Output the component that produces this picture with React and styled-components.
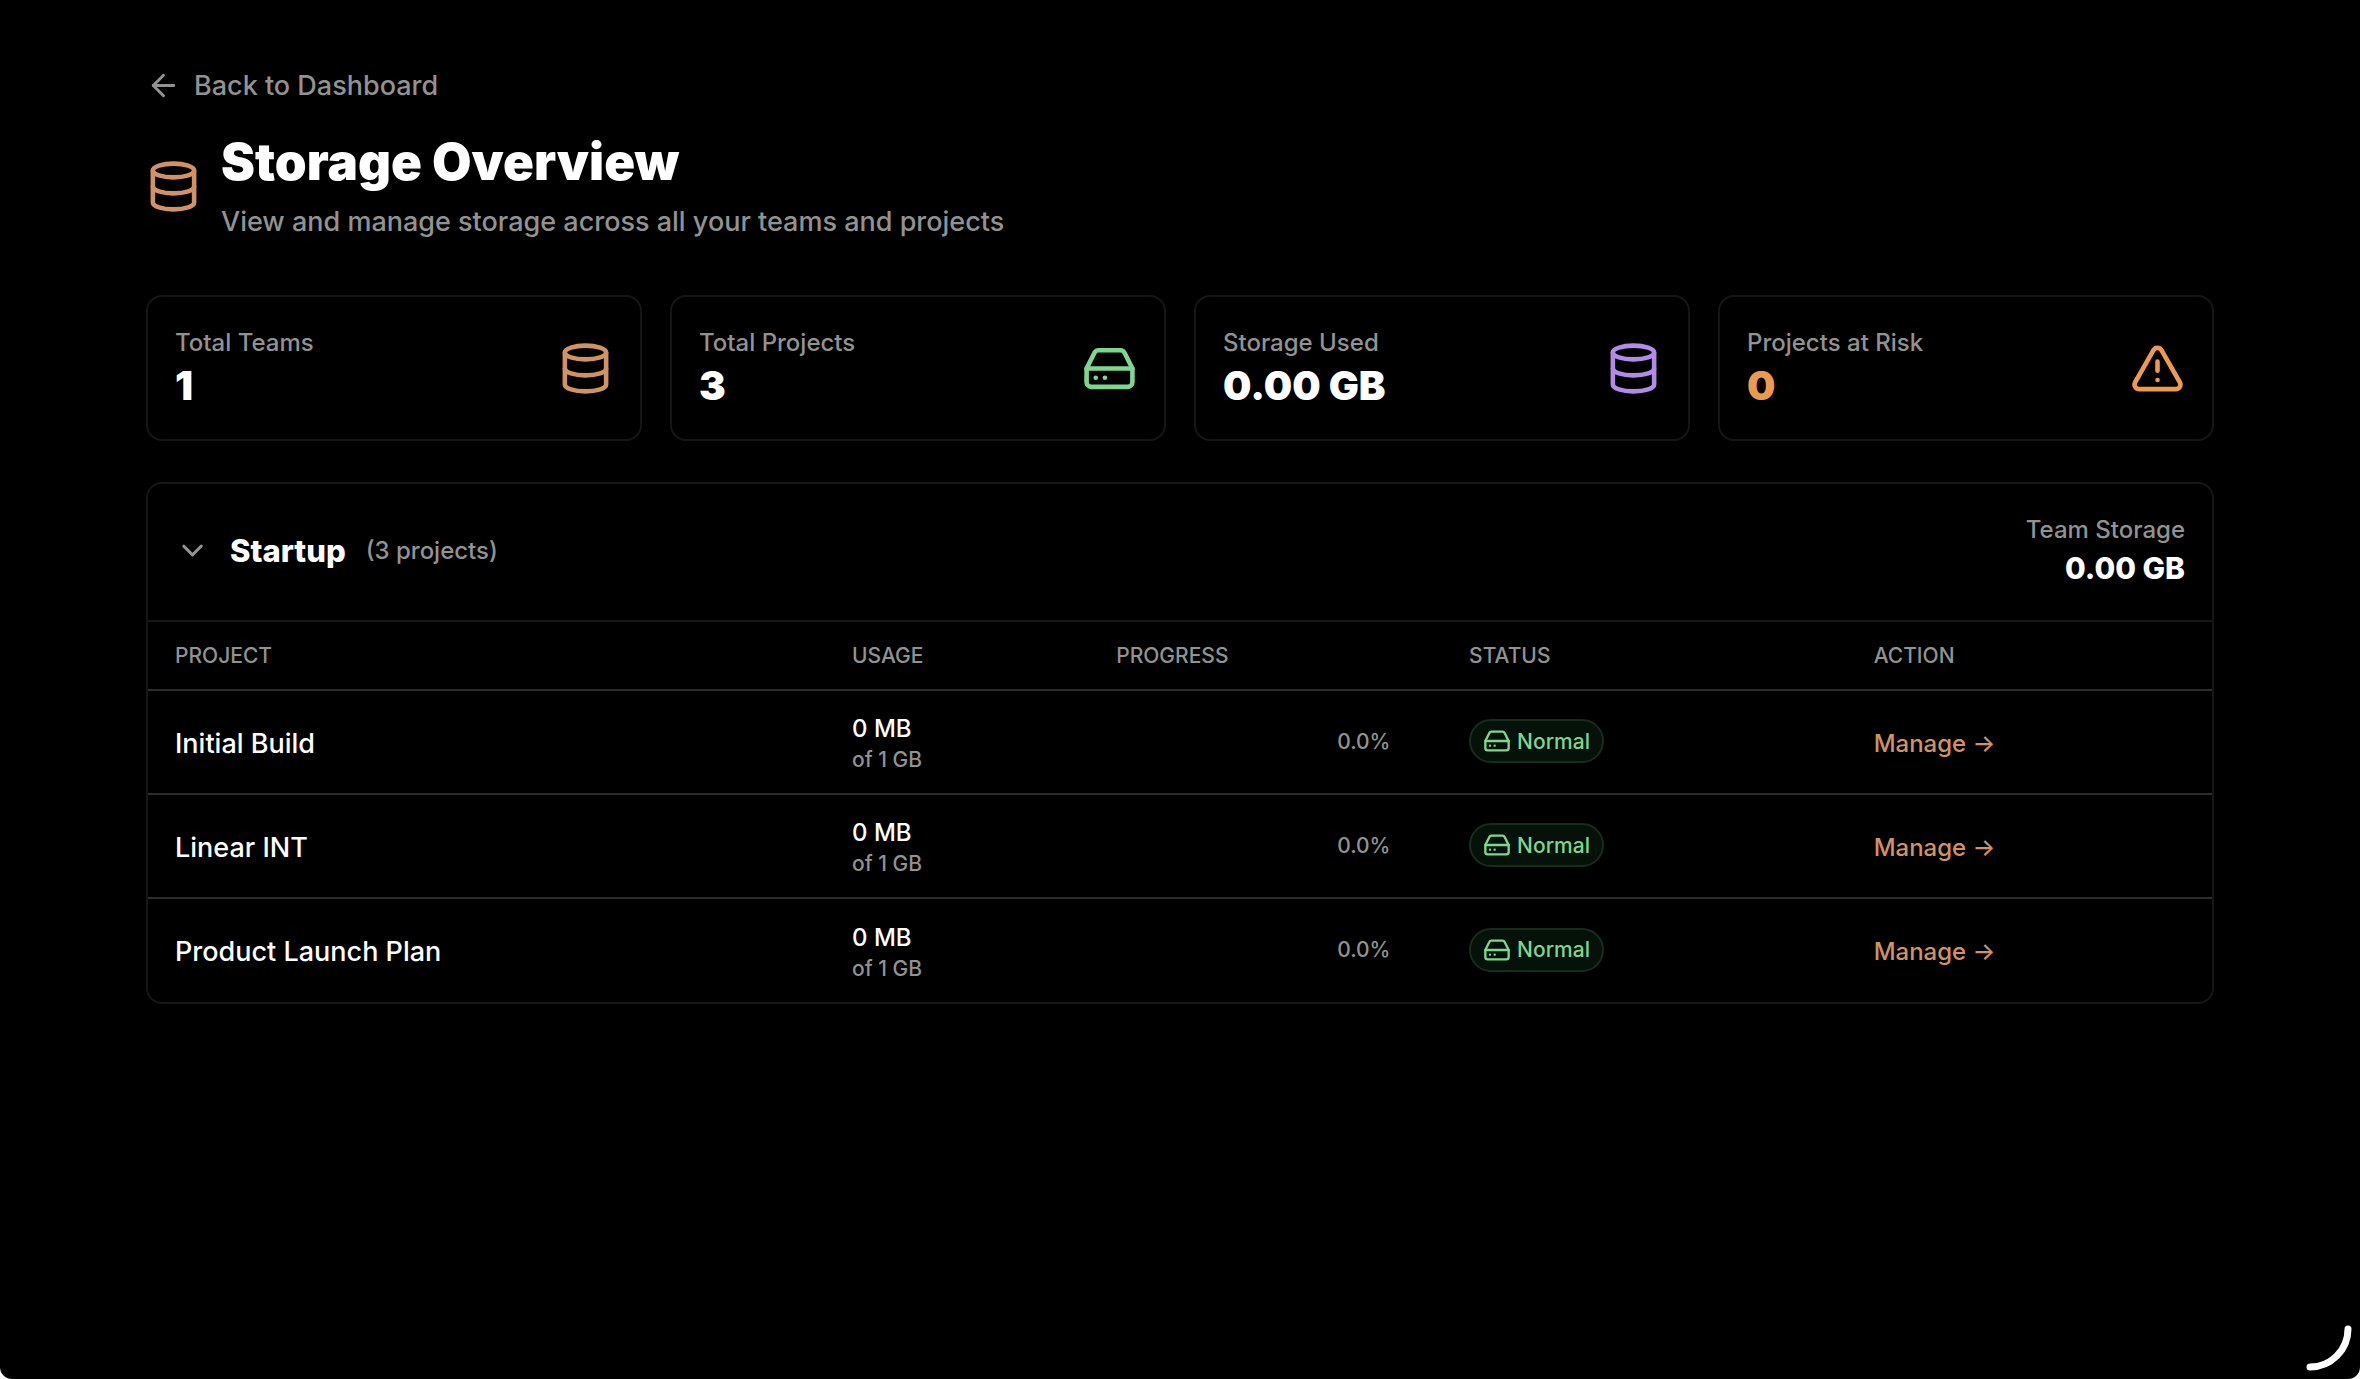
import React, { useState } from 'react';
import styled, { createGlobalStyle } from 'styled-components';
import { ArrowLeft, ChevronDown, Database, HardDrive, TriangleAlert } from 'lucide-react';

const GlobalStyle = createGlobalStyle`
    * {
        box-sizing: border-box;
    }

    body {
        margin: 0;
        background: #ffffff;
        color: #ffffff;
        font-family: Inter, "Liberation Sans", sans-serif;
        -webkit-font-smoothing: antialiased;
    }

    h1, h2, p {
        margin: 0;
    }
`;

const colors = {
    muted: '#929292',
    border: '#161616',
    rule: '#2c2c2c',
    copper: '#d19264',
    green: '#7fd690',
    purple: '#b28be6',
    orange: '#ec9a50',
};

const Page = styled.div`
    min-height: 100vh;
    padding: 54px 28px;
    background: #000000;
    border-radius: 0 0 12px 12px;
`;

const Container = styled.main`
    max-width: 2068px;
    margin: 0 auto;
`;

const BackLink = styled.a`
    display: inline-flex;
    align-items: center;
    gap: 13px;
    height: 62px;
    color: ${colors.muted};
    font-size: 27px;
    font-weight: 500;
    text-decoration: none;
`;

const Header = styled.header`
    display: flex;
    align-items: center;
    gap: 20px;
    margin-bottom: 49px;
    padding-top: 10px;
`;

const Title = styled.h1`
    font-size: 51px;
    font-weight: 900;
    line-height: 72px;
`;

const Subtitle = styled.p`
    color: ${colors.muted};
    font-size: 27px;
    font-weight: 500;
    line-height: 48px;
`;

const Stats = styled.section`
    display: grid;
    grid-template-columns: repeat(4, 1fr);
    gap: 28px;
    margin-bottom: 41px;
`;

const StatCard = styled.div`
    display: flex;
    align-items: center;
    justify-content: space-between;
    padding: 28px 27px;
    border: 2px solid ${colors.border};
    border-radius: 16px;
`;

const Label = styled.p`
    color: ${colors.muted};
    font-size: 24px;
    font-weight: 500;
    line-height: 36px;
`;

const StatValue = styled.p`
    color: ${props => props.$color || '#ffffff'};
    font-size: 40px;
    font-weight: 900;
    line-height: 50px;
`;

const Panel = styled.section`
    overflow: hidden;
    border: 2px solid ${colors.border};
    border-radius: 16px;
`;

const PanelHeader = styled.div`
    display: flex;
    align-items: flex-start;
    justify-content: space-between;
    padding: 28px 27px 31px;
    border-bottom: 2px solid ${colors.border};
`;

const TeamToggle = styled.button`
    display: flex;
    align-items: center;
    height: 77px;
    padding: 0;
    border: 0;
    background: none;
    color: ${colors.muted};
    font-family: inherit;
    cursor: pointer;

    svg {
        margin-right: 20px;
        transform: ${props => (props.$open ? 'none' : 'rotate(-90deg)')};
    }
`;

const TeamName = styled.span`
    margin-right: 20px;
    color: #ffffff;
    font-size: 31px;
    font-weight: 800;
`;

const TeamCount = styled.span`
    font-size: 24px;
    font-weight: 500;
`;

const TeamStorage = styled.div`
    text-align: right;
`;

const TeamValue = styled.p`
    font-size: 30px;
    font-weight: 800;
    line-height: 41px;
`;

const Table = styled.table`
    width: 100%;
    border-collapse: collapse;
    table-layout: fixed;
`;

const HeadCell = styled.th`
    width: ${props => props.$width};
    height: 68px;
    padding: 0 27px;
    border-bottom: 2px solid ${colors.rule};
    color: ${colors.muted};
    font-size: 21px;
    font-weight: 500;
    text-align: left;
    text-transform: uppercase;
`;

const Row = styled.tr`
    height: 104px;

    &:not(:last-child) td {
        border-bottom: 2px solid ${colors.rule};
    }
`;

const Cell = styled.td`
    padding: 2px 27px 0;
`;

const MeterCell = styled(Cell)`
    padding: 0 27px 2px;
`;

const ProjectName = styled.span`
    font-size: 27px;
    font-weight: 500;
`;

const Used = styled.p`
    font-size: 24px;
    font-weight: 500;
    line-height: 34px;
`;

const Limit = styled.p`
    color: ${colors.muted};
    font-size: 21px;
    font-weight: 500;
    line-height: 28px;
`;

const Progress = styled.div`
    display: flex;
    align-items: center;
    gap: 14px;
`;

const Track = styled.div`
    width: 207px;
    height: 14px;
    border-radius: 7px;
    overflow: hidden;
`;

const Bar = styled.div`
    height: 100%;
    background: ${colors.green};
`;

const Percent = styled.span`
    color: ${colors.muted};
    font-size: 21px;
    font-weight: 500;
`;

const Badge = styled.span`
    display: inline-flex;
    align-items: center;
    gap: 6px;
    height: 44px;
    padding: 0 12px;
    border: 2px solid #182c1e;
    border-radius: 22px;
    background: #051209;
    color: ${colors.green};
    font-size: 21px;
    font-weight: 500;
    vertical-align: middle;
`;

const ManageLink = styled.a`
    color: ${colors.copper};
    font-size: 24px;
    font-weight: 500;
    text-decoration: none;
`;

const Corner = styled.svg`
    position: fixed;
    right: 8px;
    bottom: 8px;
`;

const projects = [
    { name: 'Initial Build', used: '0 MB', limit: '1 GB', percent: 0 },
    { name: 'Linear INT', used: '0 MB', limit: '1 GB', percent: 0 },
    { name: 'Product Launch Plan', used: '0 MB', limit: '1 GB', percent: 0 },
];

function Stat({ label, value, valueColor, icon }) {
    return (
        <StatCard>
            <div>
                <Label>{label}</Label>
                <StatValue $color={valueColor}>{value}</StatValue>
            </div>
            {icon}
        </StatCard>
    )
}

function ProjectRow({ data }) {
    return (
        <Row>
            <Cell><ProjectName>{data.name}</ProjectName></Cell>
            <Cell>
                <Used>{data.used}</Used>
                <Limit>of {data.limit}</Limit>
            </Cell>
            <MeterCell>
                <Progress>
                    <Track>
                        <Bar style={{ width: `${data.percent}%` }} />
                    </Track>
                    <Percent>{data.percent.toFixed(1)}%</Percent>
                </Progress>
            </MeterCell>
            <MeterCell>
                <Badge>
                    <HardDrive size={28} strokeWidth={2} />
                    Normal
                </Badge>
            </MeterCell>
            <Cell><ManageLink href="#">Manage →</ManageLink></Cell>
        </Row>
    )
}

function App() {
    const [open, setOpen] = useState(true);

    return (
        <Page>
            <GlobalStyle />
            <Container>
                <BackLink href="#">
                    <ArrowLeft size={35} />
                    Back to Dashboard
                </BackLink>
                <Header>
                    <Database size={55} color={colors.copper} />
                    <div>
                        <Title>Storage Overview</Title>
                        <Subtitle>View and manage storage across all your teams and projects</Subtitle>
                    </div>
                </Header>
                <Stats>
                    <Stat label="Total Teams" value="1" icon={<Database size={55} color={colors.copper} />} />
                    <Stat label="Total Projects" value="3" icon={<HardDrive size={55} color={colors.green} />} />
                    <Stat label="Storage Used" value="0.00 GB" icon={<Database size={55} color={colors.purple} />} />
                    <Stat
                        label="Projects at Risk"
                        value="0"
                        valueColor={colors.orange}
                        icon={<TriangleAlert size={55} color={colors.orange} />}
                    />
                </Stats>
                <Panel>
                    <PanelHeader>
                        <TeamToggle $open={open} aria-expanded={open} onClick={() => setOpen(!open)}>
                            <ChevronDown size={35} />
                            <TeamName>Startup</TeamName>
                            <TeamCount>(3 projects)</TeamCount>
                        </TeamToggle>
                        <TeamStorage>
                            <Label>Team Storage</Label>
                            <TeamValue>0.00 GB</TeamValue>
                        </TeamStorage>
                    </PanelHeader>
                    {open && (
                        <Table>
                            <thead>
                                <tr>
                                    <HeadCell $width="32.8%">Project</HeadCell>
                                    <HeadCell $width="12.8%">Usage</HeadCell>
                                    <HeadCell $width="17.1%">Progress</HeadCell>
                                    <HeadCell $width="19.6%">Status</HeadCell>
                                    <HeadCell $width="17.7%">Action</HeadCell>
                                </tr>
                            </thead>
                            <tbody>
                                {projects.map(project => <ProjectRow key={project.name} data={project} />)}
                            </tbody>
                        </Table>
                    )}
                </Panel>
            </Container>
            <Corner width="46" height="46" viewBox="0 0 46 46" fill="none" aria-hidden="true">
                <path d="M42 4A38 38 0 0 1 4 42" stroke="#ffffff" strokeWidth="7" strokeLinecap="round" />
            </Corner>
        </Page>
    )
}

export default App;
